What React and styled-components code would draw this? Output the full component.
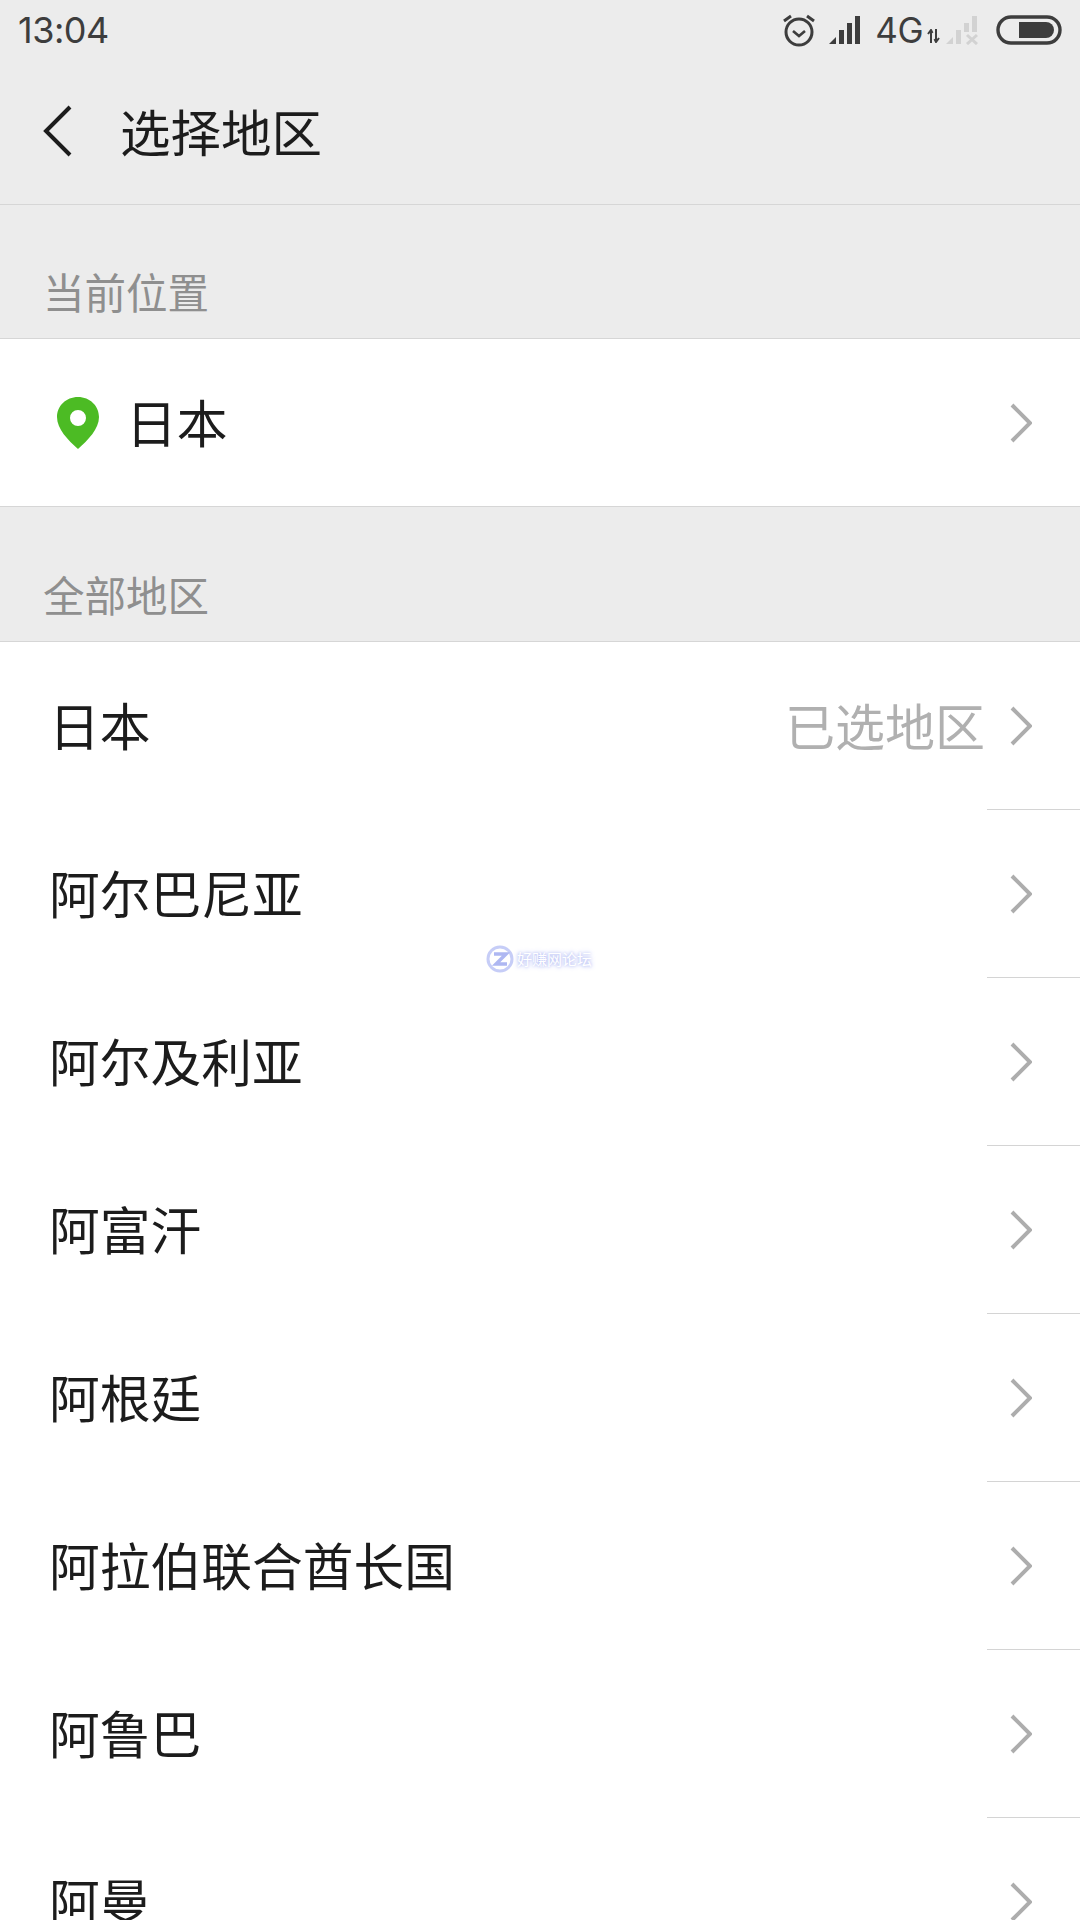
import React from 'react'
import styled, { createGlobalStyle } from 'styled-components'

const sans = `"Noto Sans CJK SC", "Liberation Sans", sans-serif`

const GlobalStyle = createGlobalStyle`
  html, body {
    margin: 0;
    padding: 0;
    background: #ececec;
  }
  * {
    box-sizing: border-box;
  }
`

const Page = styled.div`
  position: relative;
  width: 1080px;
  height: 1920px;
  overflow: hidden;
  background: #ececec;
  font-family: ${sans};
`

const StatusBar = styled.div`
  display: flex;
  align-items: center;
  justify-content: space-between;
  height: 60px;
  padding: 0 18px;
  color: #3d3d3d;
`

const Time = styled.span`
  font-family: "Inter", "Roboto", sans-serif;
  font-size: 36px;
  line-height: 62px;
  letter-spacing: -0.5px;
`

const StatusIcons = styled.div`
  display: flex;
  align-items: center;
  height: 60px;
`

const AlarmSlot = styled.div`
  margin-right: 11px;
`

const NetworkLabel = styled.span`
  font-family: "Inter", "Roboto", sans-serif;
  font-size: 35px;
  line-height: 60px;
  margin-left: 13px;
  letter-spacing: -0.5px;
`

const TitleBar = styled.header`
  display: flex;
  align-items: center;
  height: 145px;
  padding: 0 0 4px 42px;
  border-bottom: 1px solid #d6d6d6;
`

const BackIcon = styled.svg`
  display: block;
  width: 32px;
  height: 54px;
  margin: 4px 46px 0 0;
`

const Title = styled.h1`
  margin: 0;
  font-size: 50.5px;
  font-weight: 400;
  line-height: 60px;
  color: #1c1c1c;
`

const SectionLabel = styled.div`
  display: flex;
  align-items: flex-end;
  height: ${({ $height }) => $height}px;
  padding: 0 0 22px 43px;
  font-size: 41.5px;
  line-height: 50px;
  color: #8f8f8f;
  border-bottom: 1px solid #d6d6d6;
`

const List = styled.div`
  background: #fff;
`

const Row = styled.div`
  display: flex;
  align-items: center;
  height: 167px;
  padding: 0 48px 3px 49px;
`

const LocationRow = styled(List)`
  border-bottom: 1px solid #d6d6d6;
`

const PinIcon = styled.svg`
  display: block;
  width: 44px;
  height: 54px;
  margin: 3px 26px 0 7px;
`

const RowName = styled.span`
  flex: 1;
  font-size: 50.75px;
  line-height: 60px;
  color: #1c1c1c;
`

const RowHint = styled.span`
  font-size: 50px;
  line-height: 60px;
  color: #b0b0b0;
  margin-right: 25px;
`

const Chevron = styled.svg`
  display: block;
  width: 22px;
  height: 40px;
  margin-top: 3px;
`

const Divider = styled.div`
  width: 93px;
  height: 1px;
  margin-left: auto;
  background: #d4d4d4;
`

const Watermark = styled.div`
  position: absolute;
  left: 486px;
  top: 945px;
  display: flex;
  align-items: center;
  gap: 3px;
  opacity: 0.75;
`

const WatermarkText = styled.span`
  font-size: 15px;
  line-height: 28px;
  color: #fff;
  text-shadow: 0 0 5px #9aa6f2, 0 0 3px #9aa6f2;
`

const AlarmIcon = () => (
  <svg width="36" height="36" viewBox="0 0 36 36" fill="none" stroke="#3d3d3d" style={{ display: 'block' }}>
    <circle cx="18" cy="20" r="13" strokeWidth="3" />
    <path d="M12 19l6 5 6-5" strokeWidth="2.6" />
    <path d="M3 9l7-5M33 9l-7-5" strokeWidth="3" />
  </svg>
)

const SignalIcon = ({ color = '#3d3d3d', crossed }) => (
  <svg width="34" height="30" viewBox="0 0 34 30" style={{ display: 'block' }}>
    <path d="M1 29L8 22V29Z" fill={color} />
    <rect x="11" y="15" width="5" height="14" fill={color} />
    <rect x="19" y="8" width="5" height={crossed ? 9 : 21} fill={color} />
    <rect x="27" y="1" width="5" height={crossed ? 16 : 28} fill={color} />
    {crossed && <path d="M22 20l10 9M32 20l-10 9" stroke={color} strokeWidth="3" fill="none" />}
  </svg>
)

const TransferIcon = () => (
  <svg width="13" height="14" viewBox="0 0 13 14" style={{ display: 'block', margin: '12px 5px 0 4px' }}>
    <path d="M4 14V3M1 5l3-4 1.5 3M9 0v11M12 9l-3 4-1.5-3" stroke="#3d3d3d" strokeWidth="2" fill="none" />
  </svg>
)

const BatteryIcon = () => (
  <svg width="66" height="30" viewBox="0 0 66 30" style={{ display: 'block', margin: '0 0 0 17px' }}>
    <rect x="2" y="2" width="62" height="26" rx="13" fill="none" stroke="#3d3d3d" strokeWidth="3.4" />
    <path d="M23 7H50a8 8 0 0 1 8 8a8 8 0 0 1-8 8H23Z" fill="#3d3d3d" />
  </svg>
)

const ChevronRight = () => (
  <Chevron viewBox="0 0 22 40" fill="none" stroke="#adadad" strokeWidth="4">
    <path d="M2 2l18 18L2 38" />
  </Chevron>
)

const regions = [
  '阿尔巴尼亚',
  '阿尔及利亚',
  '阿富汗',
  '阿根廷',
  '阿拉伯联合酋长国',
  '阿鲁巴',
  '阿曼',
]

const App = () => (
  <Page>
    <GlobalStyle />
    <StatusBar>
      <Time>13:04</Time>
      <StatusIcons>
        <AlarmSlot>
          <AlarmIcon />
        </AlarmSlot>
        <SignalIcon />
        <NetworkLabel>4G</NetworkLabel>
        <TransferIcon />
        <SignalIcon color="#d2d2d2" crossed />
        <BatteryIcon />
      </StatusIcons>
    </StatusBar>
    <TitleBar>
      <BackIcon viewBox="0 0 32 54" fill="none" stroke="#1c1c1c" strokeWidth="4">
        <path d="M28 2L4 26l24 24" />
      </BackIcon>
      <Title>选择地区</Title>
    </TitleBar>
    <SectionLabel $height={134}>当前位置</SectionLabel>
    <LocationRow>
      <Row>
        <PinIcon viewBox="0 0 44 54">
          <path
            fillRule="evenodd"
            d="M22 1C10 1 1 10 1 21c0 12 11 23 21 32 10-9 21-20 21-32C43 10 34 1 22 1Zm0 13a8 8 0 1 1 0 16 8 8 0 0 1 0-16Z"
            fill="#4cbb24"
          />
        </PinIcon>
        <RowName>日本</RowName>
        <ChevronRight />
      </Row>
    </LocationRow>
    <SectionLabel $height={135}>全部地区</SectionLabel>
    <List>
      <Row>
        <RowName>日本</RowName>
        <RowHint>已选地区</RowHint>
        <ChevronRight />
      </Row>
      <Divider />
      {regions.map((name) => (
        <React.Fragment key={name}>
          <Row>
            <RowName>{name}</RowName>
            <ChevronRight />
          </Row>
          <Divider />
        </React.Fragment>
      ))}
    </List>
    <Watermark>
      <svg width="28" height="28" viewBox="0 0 28 28" style={{ display: 'block' }}>
        <circle cx="14" cy="14" r="12" fill="#fff" stroke="#b4bdf5" strokeWidth="3" />
        <path d="M8 9h12L10 19h11" fill="none" stroke="#93a0ee" strokeWidth="3.4" />
      </svg>
      <WatermarkText>好赚网论坛</WatermarkText>
    </Watermark>
  </Page>
)

export default App
